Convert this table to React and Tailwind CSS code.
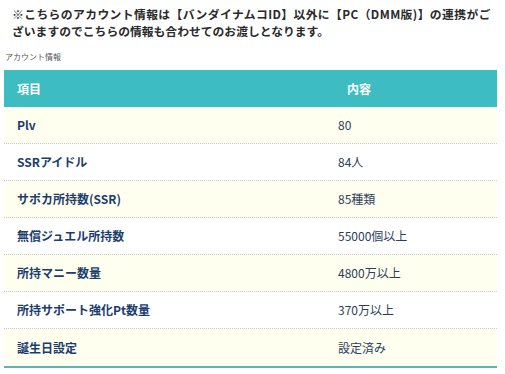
import React from 'react';

const rows = [
  ['Plv', '80'],
  ['SSRアイドル', '84人'],
  ['サポカ所持数(SSR)', '85種類'],
  ['無償ジュエル所持数', '55000個以上'],
  ['所持マニー数量', '4800万以上'],
  ['所持サポート強化Pt数量', '370万以上'],
  ['誕生日設定', '設定済み'],
];

export default function App() {
  return (
    <div
      className="w-[505px] h-[374px] bg-white overflow-hidden"
      style={{ fontFamily: '"Noto Sans CJK JP", "Noto Sans", sans-serif' }}
    >
      {/* 注意書き */}
      <p className="pt-[5px] pl-[12px] text-[11.8px] leading-[17px] font-bold text-[#2a2a2a] whitespace-nowrap">
        <span className="tracking-[0.4px]">※こちらのアカウント情報は【バンダイナムコID】以外に【PC（DMM版)】の連携がご</span>
        <br />
        ざいますのでこちらの情報も合わせてのお渡しとなります。
      </p>

      <div className="mt-[12px] pl-[5px] text-[8px] leading-[12px] text-[#555]">アカウント情報</div>

      {/* テーブル */}
      <div className="mt-[7px] ml-[4px] w-[493px] border-b-2 border-[#5fb3b7]">
        <div className="grid grid-cols-[321px_1fr] h-[37px] items-center bg-[#3dbdc2] text-white font-bold text-[12px]">
          <div className="pl-[13px]">項目</div>
          <div className="pl-[22px]">内容</div>
        </div>
        {rows.map(([label, value], i) => (
          <div
            key={label}
            className={`grid grid-cols-[321px_1fr] h-[37px] items-center text-[12px] ${
              i % 2 === 0 ? 'bg-[#fffff0]' : 'bg-white'
            } ${i < rows.length - 1 ? 'border-b border-dotted border-[#c8c8c8]' : ''}`}
          >
            <div className="pl-[13px] font-bold text-[#1b3d6e]">{label}</div>
            <div className="pl-[13px] text-[#2c3e5c]">{value}</div>
          </div>
        ))}
      </div>
    </div>
  );
}
